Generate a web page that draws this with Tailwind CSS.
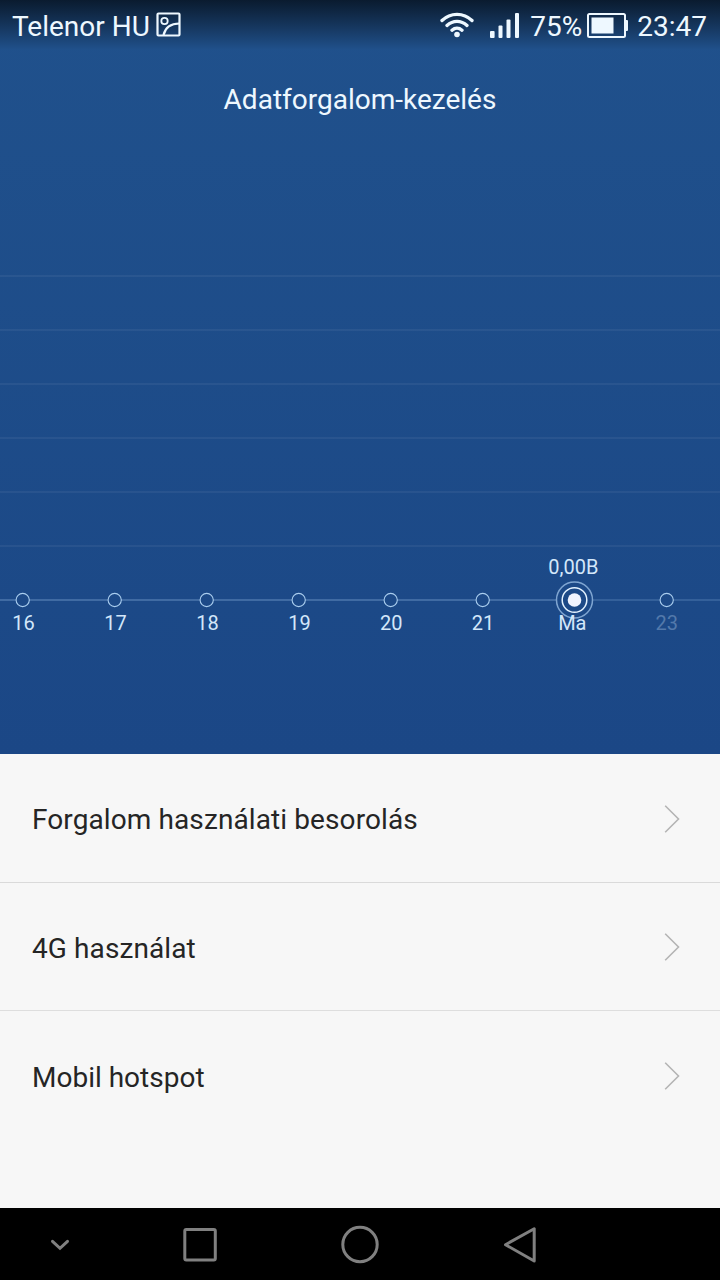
<!DOCTYPE html>
<html lang="hu">
<head>
  <meta charset="UTF-8" />
  <meta name="viewport" content="width=device-width, initial-scale=1.0"/>
  <title>Adatforgalom-kezelés</title>
  <script src="https://cdn.jsdelivr.net/npm/@tailwindcss/browser@4"></script>
</head>
<body class="w-[720px] h-[1280px] flex flex-col overflow-hidden bg-[#f7f7f7] font-['Roboto',sans-serif]">

  <!-- Traffic chart -->
  <div class="h-[754px] shrink-0 flex flex-col bg-linear-to-b from-[#20518c] to-[#1b4786] text-[#eef8ff]">

    <!-- Status bar -->
    <div class="h-[50px] shrink-0 flex items-center justify-between px-3 pt-[4px] text-[28px] leading-none bg-linear-to-b from-[#0a1b2f] to-[#20518c]">
      <div class="flex items-center">
        <span>Telenor HU</span>
        <svg class="w-[25px] h-[25px] ml-[6px] -mt-[5px]" viewBox="0 0 25 25" fill="none" stroke="currentColor" stroke-width="2.2">
          <rect x="1.5" y="1.5" width="22" height="22" rx="1"/>
          <circle cx="8.5" cy="9" r="3.2" stroke-width="1.8"/>
          <path d="M7.500 23C9 16.500 14 11.500 23.500 11.500"/>
        </svg>
      </div>
      <div class="flex items-center">
        <svg class="w-[34px] h-[26px] -mt-[4px]" viewBox="0 0 34 26" fill="none" stroke="currentColor" stroke-width="3.3" stroke-linecap="round">
          <path d="M2 8.500C10.500 .3 23.500 .3 32 8.500M7 13.500C13 8 21 8 27 13.500M12 18.200C15 15.600 19 15.600 22 18.200"/>
          <circle cx="17" cy="22.500" r="2.800" fill="currentColor" stroke="none"/>
        </svg>
        <svg class="w-[30px] h-[25px] ml-[16px] -mt-[4px]" viewBox="0 0 30 25" fill="currentColor">
          <rect x="0" y="18" width="4.600" height="7" rx="1"/>
          <rect x="8.500" y="12.500" width="4" height="12.500" rx="1"/>
          <rect x="16.500" y="6.500" width="4" height="18.500" rx="1"/>
          <rect x="25" y="0" width="4" height="25" rx="1"/>
        </svg>
        <span class="ml-[10px]">75%</span>
        <svg class="w-[42px] h-[25px] ml-[5px] -mt-[4px]" viewBox="0 0 42 25" fill="currentColor">
          <rect x="1" y="1" width="37" height="23" rx="1.500" fill="none" stroke="currentColor" stroke-width="2"/>
          <rect x="4.500" y="4.500" width="22" height="16"/>
          <rect x="38" y="7" width="3" height="11" rx="1"/>
        </svg>
        <span class="ml-[8px] mr-px">23:47</span>
      </div>
    </div>

    <h1 class="h-[100px] shrink-0 text-center text-[28px] leading-[100px]">Adatforgalom-kezelés</h1>

    <svg class="w-[720px] h-[604px] shrink-0" viewBox="0 150 720 604" fill="none">
      <path stroke="#ffffff" stroke-opacity=".055" stroke-width="2" d="M0 276H720M0 330H720M0 384H720M0 438H720M0 492H720M0 546H720"/>
      <path stroke="#a9cdf5" stroke-opacity=".26" stroke-width="2" d="M0 600H16M29 600H108M121 600H200M213 600H292M305 600H384M397 600H476M489 600H556"/>
      <path stroke="#a9cdf5" stroke-opacity=".18" stroke-width="2" d="M593 600H660M673 600H720"/>
      <g stroke="#a9cdee" stroke-width="1.100">
        <circle cx="22.700" cy="600" r="6.600"/>
        <circle cx="114.700" cy="600" r="6.600"/>
        <circle cx="206.700" cy="600" r="6.600"/>
        <circle cx="298.700" cy="600" r="6.600"/>
        <circle cx="390.700" cy="600" r="6.600"/>
        <circle cx="482.700" cy="600" r="6.600"/>
        <circle cx="666.700" cy="600" r="6.600"/>
      </g>
      <circle cx="574.500" cy="600" r="18" stroke="#7fa5d1" stroke-width="1.500"/>
      <circle cx="574.500" cy="600" r="12.300" stroke="#e3f2ff" stroke-width="1.500"/>
      <circle cx="574.500" cy="600" r="6.800" fill="#f0f4ff"/>
      <g fill="#d3e7fa" font-size="20" text-anchor="middle">
        <text x="23.500" y="629.500">16</text>
        <text x="115.500" y="629.500">17</text>
        <text x="207.500" y="629.500">18</text>
        <text x="299.500" y="629.500">19</text>
        <text x="391.200" y="629.500">20</text>
        <text x="483" y="629.500">21</text>
        <text x="572.300" y="629.500">Ma</text>
        <text x="573.300" y="573.500">0,00B</text>
        <text x="666.700" y="629.500" fill="#5379ab">23</text>
      </g>
    </svg>
  </div>

  <!-- Settings list -->
  <div class="h-[454px] shrink-0 text-[28px] text-[#252525]">
    <div class="h-[129px] flex items-center justify-between pl-8 pr-10 pt-[4px] border-b border-[#dadada]">
      <span class="tracking-[0.1px]">Forgalom használati besorolás</span>
      <svg class="w-4 h-[28px] -mt-[3px]" viewBox="0 0 16 28" fill="none" stroke="#b4b4b4" stroke-width="1.600"><path d="M1.200 .8L14.500 14L1.200 27.200"/></svg>
    </div>
    <div class="h-[128px] flex items-center justify-between pl-8 pr-10 pt-[4px] border-b border-[#dedede]">
      <span class="tracking-[0.1px]">4G használat</span>
      <svg class="w-4 h-[28px] -mt-[4px]" viewBox="0 0 16 28" fill="none" stroke="#b4b4b4" stroke-width="1.600"><path d="M1.200 .8L14.500 14L1.200 27.200"/></svg>
    </div>
    <div class="h-[129px] flex items-center justify-between pl-8 pr-10 pt-[4px]">
      <span>Mobil hotspot</span>
      <svg class="w-4 h-[28px] -mt-[4px]" viewBox="0 0 16 28" fill="none" stroke="#b4b4b4" stroke-width="1.600"><path d="M1.200 .8L14.500 14L1.200 27.200"/></svg>
    </div>
  </div>

  <!-- Navigation bar -->
  <div class="h-[72px] shrink-0 flex items-center pl-[40px] gap-[100px] bg-black text-[#808080]">
    <svg class="w-10 h-10" viewBox="0 0 40 40" fill="none" stroke="currentColor" stroke-width="3" stroke-linecap="round"><path d="M12.500 17.300L20 24.300L27.500 17.300"/></svg>
    <svg class="w-10 h-10" viewBox="0 0 40 40" fill="none" stroke="currentColor" stroke-width="3"><rect x="4.800" y="5.500" width="30.500" height="30.500" rx="1.500"/></svg>
    <svg class="w-10 h-10 ml-5" viewBox="0 0 40 40" fill="none" stroke="currentColor" stroke-width="3"><circle cx="20" cy="20.500" r="17.200"/></svg>
    <svg class="w-10 h-10 ml-5" viewBox="0 0 40 40" fill="none" stroke="currentColor" stroke-width="3" stroke-linejoin="round"><path d="M34.200 4.800V37L5.500 20.700Z"/></svg>
  </div>

</body>
</html>
